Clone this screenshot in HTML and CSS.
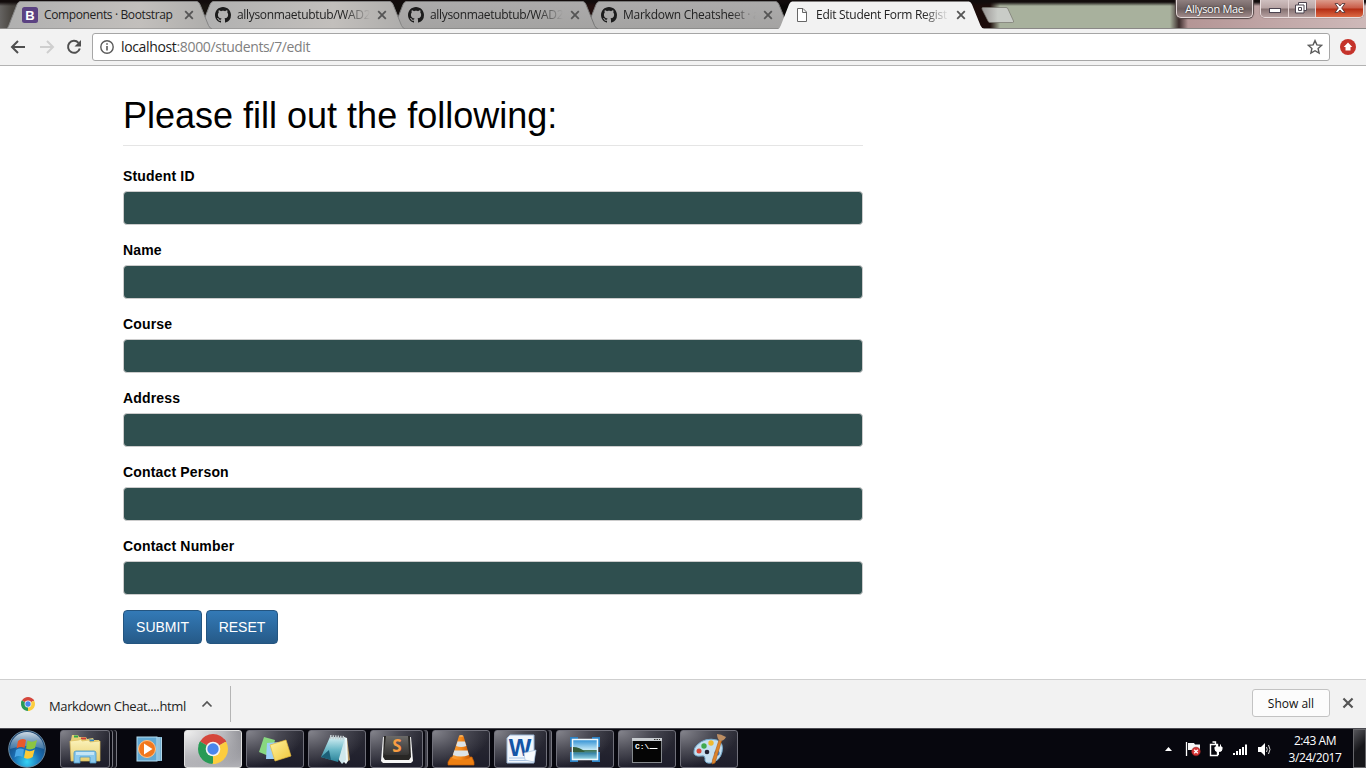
FILE: index.html
```html
<!DOCTYPE html>
<html lang="en">
<head>
<meta charset="utf-8">
<title>Edit Student Form Registration</title>
<link rel="stylesheet" href="styles.css">
</head>
<body>
<svg class="defs" aria-hidden="true">
  <defs>
    <linearGradient id="tabfill" x1="0" y1="0" x2="0" y2="1"><stop offset="0" stop-color="#acabab"/><stop offset="1" stop-color="#a4a3a2"/></linearGradient>
    <linearGradient id="tabfillA" x1="0" y1="0" x2="1" y2="0"><stop offset="0" stop-color="#b0b0b0"/><stop offset=".65" stop-color="#c2bfbc"/><stop offset="1" stop-color="#aeadab"/></linearGradient>
    <radialGradient id="orb" cx=".5" cy=".85" r=".8"><stop offset="0" stop-color="#35d3f5"/><stop offset=".45" stop-color="#1b6fb4"/><stop offset="1" stop-color="#123a68"/></radialGradient>
    <linearGradient id="shine" x1="0" y1="0" x2="0" y2="1"><stop offset="0" stop-color="#e4eef5" stop-opacity=".9"/><stop offset="1" stop-color="#8fb4cd" stop-opacity=".35"/></linearGradient>
    <linearGradient id="folder" x1="0" y1="0" x2="0" y2="1"><stop offset="0" stop-color="#fbf3bd"/><stop offset="1" stop-color="#e9cf70"/></linearGradient>
    <linearGradient id="yellow" x1="0" y1="0" x2="1" y2="1"><stop offset="0" stop-color="#fff3a0"/><stop offset="1" stop-color="#efc63a"/></linearGradient>
    <linearGradient id="pad" x1="0" y1="0" x2="0" y2="1"><stop offset="0" stop-color="#d5f0f4"/><stop offset=".5" stop-color="#6cb9c8"/><stop offset="1" stop-color="#2a8299"/></linearGradient>
    <linearGradient id="cone" x1="0" y1="0" x2="1" y2="0"><stop offset="0" stop-color="#f9a13b"/><stop offset=".5" stop-color="#f68a1b"/><stop offset="1" stop-color="#c95a05"/></linearGradient>
    <linearGradient id="sky" x1="0" y1="0" x2="0" y2="1"><stop offset="0" stop-color="#2d8ed3"/><stop offset=".5" stop-color="#bfe6f5"/><stop offset=".55" stop-color="#487a5a"/><stop offset=".7" stop-color="#3d89ac"/><stop offset="1" stop-color="#9fdce8"/></linearGradient>
    <linearGradient id="key" x1="0" y1="0" x2="0" y2="1"><stop offset="0" stop-color="#6b6a68"/><stop offset="1" stop-color="#353433"/></linearGradient>
    <symbol id="cross" viewBox="0 0 10 10"><path d="M1.2 1.2l7.6 7.6M8.8 1.2L1.2 8.8" fill="none" stroke="#555" stroke-width="1.8"/></symbol>
    <symbol id="github" viewBox="0 0 16 16"><path fill="#1c1c1c" d="M8 0C3.58 0 0 3.58 0 8c0 3.54 2.29 6.53 5.47 7.59.4.07.55-.17.55-.38 0-.19-.01-.82-.01-1.49-2.01.37-2.53-.49-2.69-.94-.09-.23-.48-.94-.82-1.13-.28-.15-.68-.52-.01-.53.63-.01 1.08.58 1.23.82.72 1.21 1.87.87 2.33.66.07-.52.28-.87.51-1.07-1.78-.2-3.64-.89-3.64-3.95 0-.87.31-1.59.82-2.15-.08-.2-.36-1.02.08-2.12 0 0 .67-.21 2.2.82.64-.18 1.32-.27 2-.27s1.36.09 2 .27c1.53-1.04 2.2-.82 2.2-.82.44 1.1.16 1.92.08 2.12.51.56.82 1.27.82 2.15 0 3.07-1.87 3.75-3.65 3.95.29.25.54.73.54 1.48 0 1.07-.01 1.93-.01 2.2 0 .21.15.46.55.38A8.01 8.01 0 0 0 16 8c0-4.42-3.58-8-8-8z"/></symbol>
    <symbol id="tabshape" viewBox="0 0 206 28" preserveAspectRatio="none"><path d="M0 28C1.500 27.500 2 26 2.800 24.500L11 3.500Q12 1 14 .5H191Q193 1 194 3.500L202.500 24.500Q204 27.500 206 28Z"/></symbol>
    <symbol id="chrome" viewBox="0 0 30 30">
      <path d="M15 15L2.010 7.500A15 15 0 0 1 27.990 7.500Z" fill="#d5473c"/>
      <path d="M15 15L27.990 7.500A15 15 0 0 1 15 30Z" fill="#fccd3f"/>
      <path d="M15 15L15 30A15 15 0 0 1 2.010 7.500Z" fill="#289a55"/>
      <path d="M15 8H28.250Q27.500 6.300 26.300 5.100L15 5Z" fill="#d5473c"/>
      <path d="M21.060 18.500L14.300 30Q16 30.100 17.500 29.800L25 20Z" fill="#fccd3f"/>
      <path d="M8.940 18.500L2.200 7.200Q1.200 9 .6 11L6 20Z" fill="#289a55"/>
      <circle cx="15" cy="15" r="7.300" fill="#f4f4f4"/><circle cx="15" cy="15" r="5.700" fill="#4a86ec"/>
    </symbol>
  </defs>
</svg>

<header class="tabstrip">
  <div class="tabs">
    <div class="tab tab-1"><svg class="tab-bg" fill="url(#tabfillA)" stroke="#858585"><use href="#tabshape"/></svg>
      <svg class="fav" viewBox="0 0 16 16"><rect width="16" height="16" rx="2.500" fill="#5b4282"/><text x="8" y="12.600" text-anchor="middle" class="fav-b">B</text></svg>
      <span class="tab-title t-a">Components · Bootstrap</span><svg class="x"><use href="#cross"/></svg></div>
    <div class="tab tab-2"><svg class="tab-bg" fill="url(#tabfillA)" stroke="#858585"><use href="#tabshape"/></svg>
      <svg class="fav"><use href="#github"/></svg>
      <span class="tab-title t-b fade">allysonmaetubtub/WAD2</span><svg class="x"><use href="#cross"/></svg></div>
    <div class="tab tab-3"><svg class="tab-bg" fill="url(#tabfill)" stroke="#777"><use href="#tabshape"/></svg>
      <svg class="fav"><use href="#github"/></svg>
      <span class="tab-title t-b fade">allysonmaetubtub/WAD2</span><svg class="x"><use href="#cross"/></svg></div>
    <div class="tab tab-4"><svg class="tab-bg" fill="url(#tabfill)" stroke="#777"><use href="#tabshape"/></svg>
      <svg class="fav"><use href="#github"/></svg>
      <span class="tab-title t-c fade">Markdown Cheatsheet · a</span><svg class="x"><use href="#cross"/></svg></div>
    <div class="tab tab-5"><svg class="tab-bg" fill="#f2f2f2"><use href="#tabshape"/></svg>
      <svg class="fav" viewBox="0 0 16 16"><path d="M3.500 1.500h5.500l3.500 3.500v9.500h-9zM8.500 1.500v4h4" fill="#fff" stroke="#666"/></svg>
      <span class="tab-title t-d fade">Edit Student Form Regist</span><svg class="x"><use href="#cross"/></svg></div>
  </div>
  <svg class="newtab" viewBox="0 0 35 17"><defs><linearGradient id="nt"><stop offset="0" stop-color="#999594"/><stop offset=".5" stop-color="#c9ccc7"/></linearGradient></defs><path d="M2 .5H25Q26.500.5 27 2L32.500 14Q33 15.500 31.500 15.500H9Q7.500 15.500 7 14L1 2Q.5.5 2 .5Z" fill="url(#nt)" stroke="#77766f" stroke-width=".7"/></svg>
  <div class="user">Allyson Mae</div>
  <div class="winbtns">
    <span class="wb w-min"><svg width="12" height="5"><rect x=".5" y=".5" width="11" height="4" fill="#fff" stroke="#4c4450"/></svg></span>
    <span class="wb w-max"><svg width="12" height="12"><path d="M3.500.5h8v8h-2.500v2.500H.5V3h3z" fill="#fff" stroke="#4c4450"/><path d="M3.500 5.500h3v3h-3zM3.500 3h5.500v6" fill="none" stroke="#4c4450"/></svg></span>
    <span class="wb w-close"><svg width="12" height="10" viewBox="0 0 12 10"><path d="M1 .6h3L6 3l2-2.400h3L7.700 5 11 9.400H8L6 7 4 9.400H1L4.300 5z" fill="#fff" stroke="#4f3233" stroke-width=".9"/></svg></span>
  </div>
</header>

<nav class="toolbar">
  <svg class="nav" viewBox="0 0 90 20" fill="none" stroke-width="2"><path d="M25 10H12.500M18 4l-6 6 6 6" stroke="#4f4f4f"/><path d="M40 10h12M47 4l6 6-6 6" stroke="#cfcfcf"/><path d="M78.500 5.800A6 6 0 1 0 79.800 11.500" stroke="#4f4f4f"/><path d="M81 3v6.500h-6.500z" fill="#4f4f4f"/></svg>
  <div class="omnibox">
    <svg class="info" viewBox="0 0 14 14"><circle cx="7" cy="7" r="6.200" fill="none" stroke="#5a5a5a" stroke-width="1.400"/><path d="M6.200 6h1.600v4.500H6.200zM6.200 3.300h1.600v1.500H6.200z" fill="#5a5a5a"/></svg>
    <span class="url"><b>localhost</b>:8000/students/7/edit</span>
    <svg class="star" viewBox="0 0 16 16"><path d="M8 1.600l1.900 4.300 4.700.5-3.500 3.100 1 4.600L8 11.700l-4.100 2.400 1-4.600L1.400 6.400l4.700-.5z" fill="none" stroke="#5a5a5a" stroke-width="1.400"/></svg>
  </div>
  <svg class="ext" viewBox="0 0 16 16"><circle cx="8" cy="8" r="8" fill="#c5332b"/><path d="M8 3.500L12.300 8H10.500v3.500h-5V8H3.700z" fill="#fff"/></svg>
</nav>

<main class="page">
  <form class="form">
    <h1>Please fill out the following:</h1>
    <div class="group"><label for="f1">Student ID</label><input id="f1"></div>
    <div class="group"><label for="f2">Name</label><input id="f2"></div>
    <div class="group"><label for="f3">Course</label><input id="f3"></div>
    <div class="group"><label for="f4">Address</label><input id="f4"></div>
    <div class="group"><label for="f5">Contact Person</label><input id="f5"></div>
    <div class="group"><label for="f6">Contact Number</label><input id="f6"></div>
    <div class="actions"><button type="button" class="btn submit">SUBMIT</button><button type="button" class="btn reset">RESET</button></div>
  </form>
</main>

<section class="downloads">
  <div class="dl-item">
    <svg class="dl-icon"><use href="#chrome"/></svg>
    <span class="dl-name">Markdown Cheat....html</span>
    <svg class="dl-caret" viewBox="0 0 12 8"><path d="M1.500 6.500L6 2l4.500 4.500" fill="none" stroke="#555" stroke-width="1.700"/></svg>
  </div>
  <button type="button" class="showall">Show all</button>
  <svg class="dl-x"><use href="#cross"/></svg>
</section>

<footer class="taskbar">
  <svg class="start" viewBox="0 0 40 38">
    <circle cx="20" cy="19" r="18.300" fill="url(#orb)" stroke="#6d8ca2"/>
    <path d="M3 19A17 17 0 0 1 37 19Q20 13 3 19Z" fill="url(#shine)"/>
    <path d="M11 11Q15 7.500 19 10L17.500 18Q14 16 9.500 18.500Z" fill="#e9592b"/>
    <path d="M20.500 10.500Q25 13 30 10L28 18Q23.500 20.500 19 18.500Z" fill="#8cc542"/>
    <path d="M9 20Q13 17.500 17 19.500L15.500 27Q11.500 25 7.500 27.500Z" fill="#49a7e6"/>
    <path d="M18.500 20Q23 22.500 27.700 19.500L25.700 27Q21.500 30 17 27.800Z" fill="#fdca35"/>
  </svg>
  <div class="task w-explorer stack2"><svg viewBox="0 0 36 34">
    <path d="M4 8L5 3h6l1 2h7l1 2 6-1 1 2h5v20H4z" fill="#e6cf78"/><path d="M7 3.500h4v2H7z" fill="#32a747"/><path d="M14 5.500h5v2h-5z" fill="#cc3d34"/><path d="M22 7.500h5v2h-5z" fill="#3586c3"/>
    <path d="M3 9l9-1 2-1 1 2 7-1 1 2 10-1v20H4z" fill="url(#folder)" stroke="#dcbd5c" stroke-width=".7"/>
    <path d="M7 31V21q0-2 2-2h18q2 0 2 2v10h-6v-6H13v6z" fill="#8bc9ec" stroke="#4a95c4" stroke-width=".8"/><path d="M9 20h18v3H9z" fill="#c4e5f6"/></svg></div>
  <div class="task plain w-wmp"><svg viewBox="0 0 36 34">
    <path d="M24 5h6v24h-6z" fill="#74afd0"/><path d="M29.500 5.500v23M27 5v24" stroke="#c1e0ee" stroke-width=".8"/><rect x="5" y="5" width="20" height="24" fill="#62a9d3" stroke="#b6ddf0"/><circle cx="15" cy="17" r="8.500" fill="#f2781e" stroke="#ffc48a"/><path d="M12 11.500l8.500 5.500-8.500 5.500z" fill="#fff"/></svg></div>
  <div class="task active w-normal"><svg viewBox="-3 -2 36 34"><use href="#chrome" width="30" height="30"/></svg></div>
  <div class="task w-normal"><svg viewBox="0 0 36 34">
    <path d="M7 5l11 3-4 17L2 20z" fill="#88d880"/><path d="M10 11l13-1 1 17H9z" fill="#9bcff7"/><path d="M13 13l16-5 5 16-16 5z" fill="url(#yellow)" stroke="#e6ba3d" stroke-width=".7"/></svg></div>
  <div class="task w-normal"><svg viewBox="0 0 36 34">
    <path d="M28 6l3 22-4 2-2-3z" fill="#b49665"/><path d="M25 5l3 1 1 23-2 3-5-5z" fill="#eef8f8"/><path d="M11 5l15 1 1 22-4 4-3-4z" fill="#cfe7ec"/><path d="M11 5l15 1-7 24L2 25z" fill="url(#pad)"/><path d="M2 25l8-7 2 10z" fill="#1c5f77"/><path d="M11 5l15 1" stroke="#c5cfd2" stroke-width="4" stroke-dasharray="1.500 1"/></svg></div>
  <div class="task w-split stack1"><svg viewBox="0 0 36 34">
    <path d="M4 5h28l2 24-2 2H4l-2-2z" fill="#f5f5f5"/><path d="M5 4h26l1 21-2 3H6l-2-3z" fill="#282725"/><path d="M7 4h22l1 17q0 2-2 2H7q-2 0-2-2z" fill="url(#key)"/><text x="18" y="20" text-anchor="middle" class="sub-s">S</text></svg></div>
  <div class="task w-normal"><svg viewBox="0 0 36 34">
    <path d="M8 25h21l2 5v3H5v-3z" fill="#ee8013" stroke="#c65e08" stroke-width=".7"/><path d="M16 4h4.500l6.500 22q-8.500 4-18 0z" fill="url(#cone)"/><path d="M14.500 9.500h7.400l1.400 4.500q-5 2-10.200 0z" fill="#dce3e7"/><path d="M11.300 18.500h13.300l1.300 4.500q-8 3-16 0z" fill="#dce3e7"/><ellipse cx="18.200" cy="4" rx="2.200" ry="1" fill="#f5ad56"/></svg></div>
  <div class="task w-split stack1"><svg viewBox="0 0 36 34">
    <path d="M4 6l3-3h24v28H4z" fill="#f1f6fc" stroke="#9db8d7"/><path d="M6 26h22M6 28.500h22" stroke="#a9c4e4"/><text x="17" y="24" text-anchor="middle" class="word-w">W</text><path d="M21 21l12-3-2 12-9-2z" fill="#f8fbfe" stroke="#aac3df" stroke-width=".7"/></svg></div>
  <div class="task w-normal"><svg viewBox="0 0 36 34">
    <path d="M3 5h8v5H8v5H3zM25 5h8v10h-5v-5h-3zM3 20h5v5h3v5H3zM28 20h5v10h-8v-5h3z" fill="#2d83c5"/><rect x="5.500" y="7.500" width="25" height="20" fill="url(#sky)" stroke="#edf8fc" stroke-width="1.500"/><path d="M6 15q7 0 12 5H6z" fill="#345c3a"/></svg></div>
  <div class="task w-normal"><svg viewBox="0 0 36 34">
    <rect x="3.500" y="6.500" width="29" height="24" fill="#050505" stroke="#85898d"/><path d="M3 6h30v3H3z" fill="#c9cdd1"/><path d="M25 7.500h6" stroke="#333" stroke-dasharray="1.500 1"/><text x="6" y="17" class="cmd-t">C:\</text><path d="M20.500 16.500h8" stroke="#fff"/></svg></div>
  <div class="task w-normal"><svg viewBox="0 0 36 34">
    <path d="M6 13Q14 5 26 8q7 3 5 12-2 9-11 11-7 1-6-5 0-3-4-2-8 1-7-5 0-3 3-6z" fill="#c5e0f1" stroke="#75a9cb"/><circle cx="8" cy="19" r="2.500" fill="#da4839"/><circle cx="13" cy="14" r="2.700" fill="#40aa4e"/><circle cx="20" cy="11" r="2.700" fill="#efba30"/><circle cx="16" cy="20" r="2.300" fill="#223"/><circle cx="26" cy="21" r="2.600" fill="#3c7bc8"/><path d="M28 8l2.500 1-6.500 22-3 1 .5-4z" fill="#dd842b" stroke="#a95c1a" stroke-width=".6"/><path d="M26 2q4 0 9 3-2 4-6 4-3-2-3-7z" fill="#bd8e63"/></svg></div>
  <div class="tray">
    <svg class="tray-icons" viewBox="0 0 110 20"><path d="M2 12l3.500-4 3.500 4z" fill="#fff"/>
      <path d="M23.500 3v14" stroke="#fff" stroke-width="1.300"/><path d="M25 4h6l1 1.500h5V11H25z" fill="#f6f6f6"/><circle cx="33" cy="12.500" r="4.300" fill="#d83434" stroke="#8d2222" stroke-width=".6"/><path d="M31.200 10.700l3.600 3.600M34.800 10.700l-3.600 3.600" stroke="#fff" stroke-width="1.300"/>
      <path d="M47.500 5.500h7v11h-7zM49.500 3h3v2.500" fill="none" stroke="#fff" stroke-width="1.400"/><path d="M52 8h7v2q0 2.500-2.500 2.500h-2Q52 12.500 52 10zM53.500 5.500v3M57.500 5.500v3M55.500 12v4" fill="#fff" stroke="#fff"/>
      <path d="M71 16v-2M74 16v-4M77 16v-6M80 16V8M83 16V5.500" stroke="#fff" stroke-width="2"/>
      <path d="M95 8h3l4-4v13l-4-4h-3z" fill="#fff"/><path d="M103.500 8q1.500 2.500 0 5M105.500 6q3 4.500 0 9" fill="none" stroke="#ddd"/></svg>
    <div class="clock"><span class="time">2:43 AM</span><span class="date">3/24/2017</span></div>
    <div class="peek"></div>
  </div>
</footer>
</body>
</html>
```
FILE: styles.css
```css
* { box-sizing: border-box; }
body { margin: 0; width: 1366px; height: 768px; overflow: hidden; display: flex; flex-direction: column; background: #fff; font-family: "Open Sans", "Noto Sans", sans-serif; color: #222; }
svg { display: block; flex: none; }
.defs { position: absolute; width: 0; height: 0; }

/* Tab strip */
.tabstrip { flex: none; height: 29px; display: flex; align-items: flex-start; padding-left: 6px; border-bottom: 1px solid #8a8887;
  background: linear-gradient(#120c0c 0 2px, transparent 6px), linear-gradient(90deg, #656361 0, #48443f 12px, #17130f 210px, #100c0a 420px, #220f0e 600px, #090706 780px, #1c0c0a 990px, #a8b19d 1000px, #a8b19d 1170px, #3b2b2b 1179px, #b49595 1188px, #c3aaaa 1290px, #ceb9b9 1366px); }
.tabs { display: flex; width: 978px; padding-top: 1px; }
.tab { position: relative; flex: none; width: 206px; height: 28px; margin-right: -13px; display: flex; align-items: center; padding-left: 16px; }
.tab-1 { z-index: 5; } .tab-2 { z-index: 4; } .tab-3 { z-index: 3; } .tab-4 { z-index: 2; } .tab-5 { z-index: 6; }
.tab-bg { position: absolute; left: 0; top: 0; width: 206px; height: 28px; z-index: -1; }
.fav { width: 16px; height: 16px; margin-right: 5px; }
.fav-b { font: bold 13px "Liberation Sans", sans-serif; fill: #fff; }
.tab-title { width: 134px; white-space: nowrap; font-size: 12px; line-height: 20px; margin-right: 7px; }
.fade { -webkit-mask-image: linear-gradient(90deg, #000 108px, transparent 134px); mask-image: linear-gradient(90deg, #000 108px, transparent 134px); }
.t-a { letter-spacing: -.37px; padding-left: 1px; }
.t-b { letter-spacing: -.33px; padding-left: 1px; }
.t-c { letter-spacing: -.26px; padding-left: 1px; }
.t-d { letter-spacing: -.28px; padding-left: 1px; }
.x { width: 10px; height: 10px; }
.newtab { width: 35px; height: 17px; margin-top: 7px; margin-left: -3px; }
.user { margin-left: auto; width: 77px; height: 18px; border: 1px solid #e3d8d8; border-top: 0; border-radius: 0 0 5px 5px; background: linear-gradient(#8f8080, #6d5f5f 9px, #a08a8a); color: #fff; font-size: 11px; line-height: 17px; text-align: center; letter-spacing: -.3px; text-shadow: 0 0 2px #222; white-space: nowrap; box-shadow: 0 0 1px 1px #544747; }
.winbtns { display: flex; margin: 0 2px 0 7px; height: 18px; border: 1px solid #eadede; border-top: 0; border-radius: 0 0 5px 5px; overflow: hidden; box-shadow: 0 0 1px #3c2c2c; }
.wb { display: flex; align-items: center; justify-content: center; background: linear-gradient(#cfbfbf, #b8a4a4 8px, #857171 9px, #b6a0a0); }
.w-min { width: 28px; padding-top: 4px; border-right: 1px solid #e3d3d3; }
.w-max { width: 27px; padding-bottom: 1px; padding-right: 2px; border-right: 1px solid #e3d3d3; }
.w-close { width: 47px; padding-bottom: 1px; background: linear-gradient(#dc9b8c, #c95c48 8px, #b42d14 9px, #dc6a45); }

/* Toolbar */
.toolbar { flex: none; height: 37px; display: flex; align-items: center; background: #f2f2f2; border-bottom: 1px solid #b3b3b3; }
.nav { width: 90px; height: 20px; margin-right: 2px; }
.omnibox { width: 1238px; height: 28px; display: flex; align-items: center; background: #fff; border: 1px solid #a6a6a6; border-radius: 3px; padding: 0 6px 0 7px; }
.info { width: 14px; height: 14px; margin-right: 7px; }
.url { font-size: 14px; color: #808080; letter-spacing: -.35px; line-height: 20px; }
.url b { font-weight: 400; color: #1c1c1c; }
.star { width: 16px; height: 16px; margin-left: auto; }
.ext { width: 16px; height: 16px; margin-left: 10px; }

/* Page form */
.page { flex: none; height: 613px; padding: 29px 0 0 123px; font-family: "Liberation Sans", Arial, sans-serif; color: #000; }
.form { width: 740px; }
h1 { margin: 0 0 20px; height: 51px; padding-top: 1px; font-size: 36px; font-weight: 400; line-height: 40px; border-bottom: 1px solid #e5e5e5; }
.group { margin-bottom: 15px; }
label { display: block; font-size: 14px; font-weight: 700; line-height: 20px; margin-bottom: 5px; letter-spacing: .17px; }
input { display: block; width: 740px; height: 34px; background: #2f4f4f; border: 1px solid #ccc; border-radius: 4px; padding: 6px 12px; }
.actions { display: flex; gap: 4px; }
.btn { height: 34px; padding: 0; border: 1px solid #245580; border-radius: 4px; background: linear-gradient(#337ab7, #265a88); color: #fff; font: 14px "Liberation Sans", Arial, sans-serif; }
.submit { width: 79px; } .reset { width: 72px; }

/* Download shelf */
.downloads { flex: none; height: 49px; display: flex; align-items: center; background: #f2f2f2; border-top: 1px solid #cfcfcf; }
.dl-item { width: 231px; height: 36px; display: flex; align-items: center; padding-left: 21px; border-right: 1px solid #b5b5b5; }
.dl-icon { width: 14px; height: 14px; }
.dl-name { width: 137px; margin: 3px 15px 0 14px; font-size: 13px; letter-spacing: -.38px; white-space: nowrap; }
.dl-caret { width: 12px; height: 8px; }
.showall { margin: 0 12px 2px auto; width: 78px; height: 28px; padding: 0; border: 1px solid #c3c3c3; border-radius: 3px; background: #fcfcfc; color: #111; font: 12px "Open Sans", "Noto Sans", sans-serif; }
.dl-x { width: 12px; height: 12px; margin: 0 12px 2px 0; }

/* Taskbar */
.taskbar { flex: none; height: 40px; display: flex; align-items: center; background: #07070e; border-top: 1px solid #4b4b52; padding-left: 7px; }
.start { width: 40px; height: 38px; margin-right: 13px; }
.task { height: 38px; display: flex; align-items: center; justify-content: center; border: 1px solid #70707a; border-radius: 3px; margin-right: 4px; background: radial-gradient(ellipse at 0 0, #85858d, #4a4a54 40%, transparent 72%), linear-gradient(#2b2b35, #1e1e2b); }
.task svg { width: 36px; height: 34px; }
.w-normal { width: 58px; }
.w-explorer { width: 50px; }
.w-split { width: 53px; }
.stack1 { margin-right: 9px; box-shadow: 2px 0 #0b0b13, 4px 0 #41414b, 5px 0 #777780; }
.stack2 { margin-right: 11px; box-shadow: 2px 0 #0b0b13, 3px 0 #777780, 6px 0 #16161e, 7px 0 #777780; }
.plain { width: 58px; border-color: transparent; background: none; margin-right: 5px; }
.active { background: radial-gradient(ellipse at 0 0, #f0f0f0, #b8b8bc 50%, transparent 85%), linear-gradient(#77777e, #b0b0b5); border-color: #e0e0e0; }
.sub-s { font: bold 17px "Open Sans", sans-serif; fill: #fa9d42; }
.word-w { font: bold 24px "Liberation Sans", sans-serif; fill: #1455a6; }
.cmd-t { font: bold 8px "Liberation Mono", monospace; fill: #fff; }
.tray { margin-left: auto; height: 39px; display: flex; align-items: center; }
.tray-icons { width: 110px; height: 20px; margin-right: 1px; }
.clock { width: 74px; display: flex; flex-direction: column; align-items: center; color: #fff; font-size: 12px; line-height: 17px; letter-spacing: -.45px; padding: 1px 0 0 8px; margin-right: 5px; }
.peek { width: 13px; height: 39px; border: 1px solid #66666a; background: linear-gradient(135deg, #55555a, #16161a 50%); }
```
